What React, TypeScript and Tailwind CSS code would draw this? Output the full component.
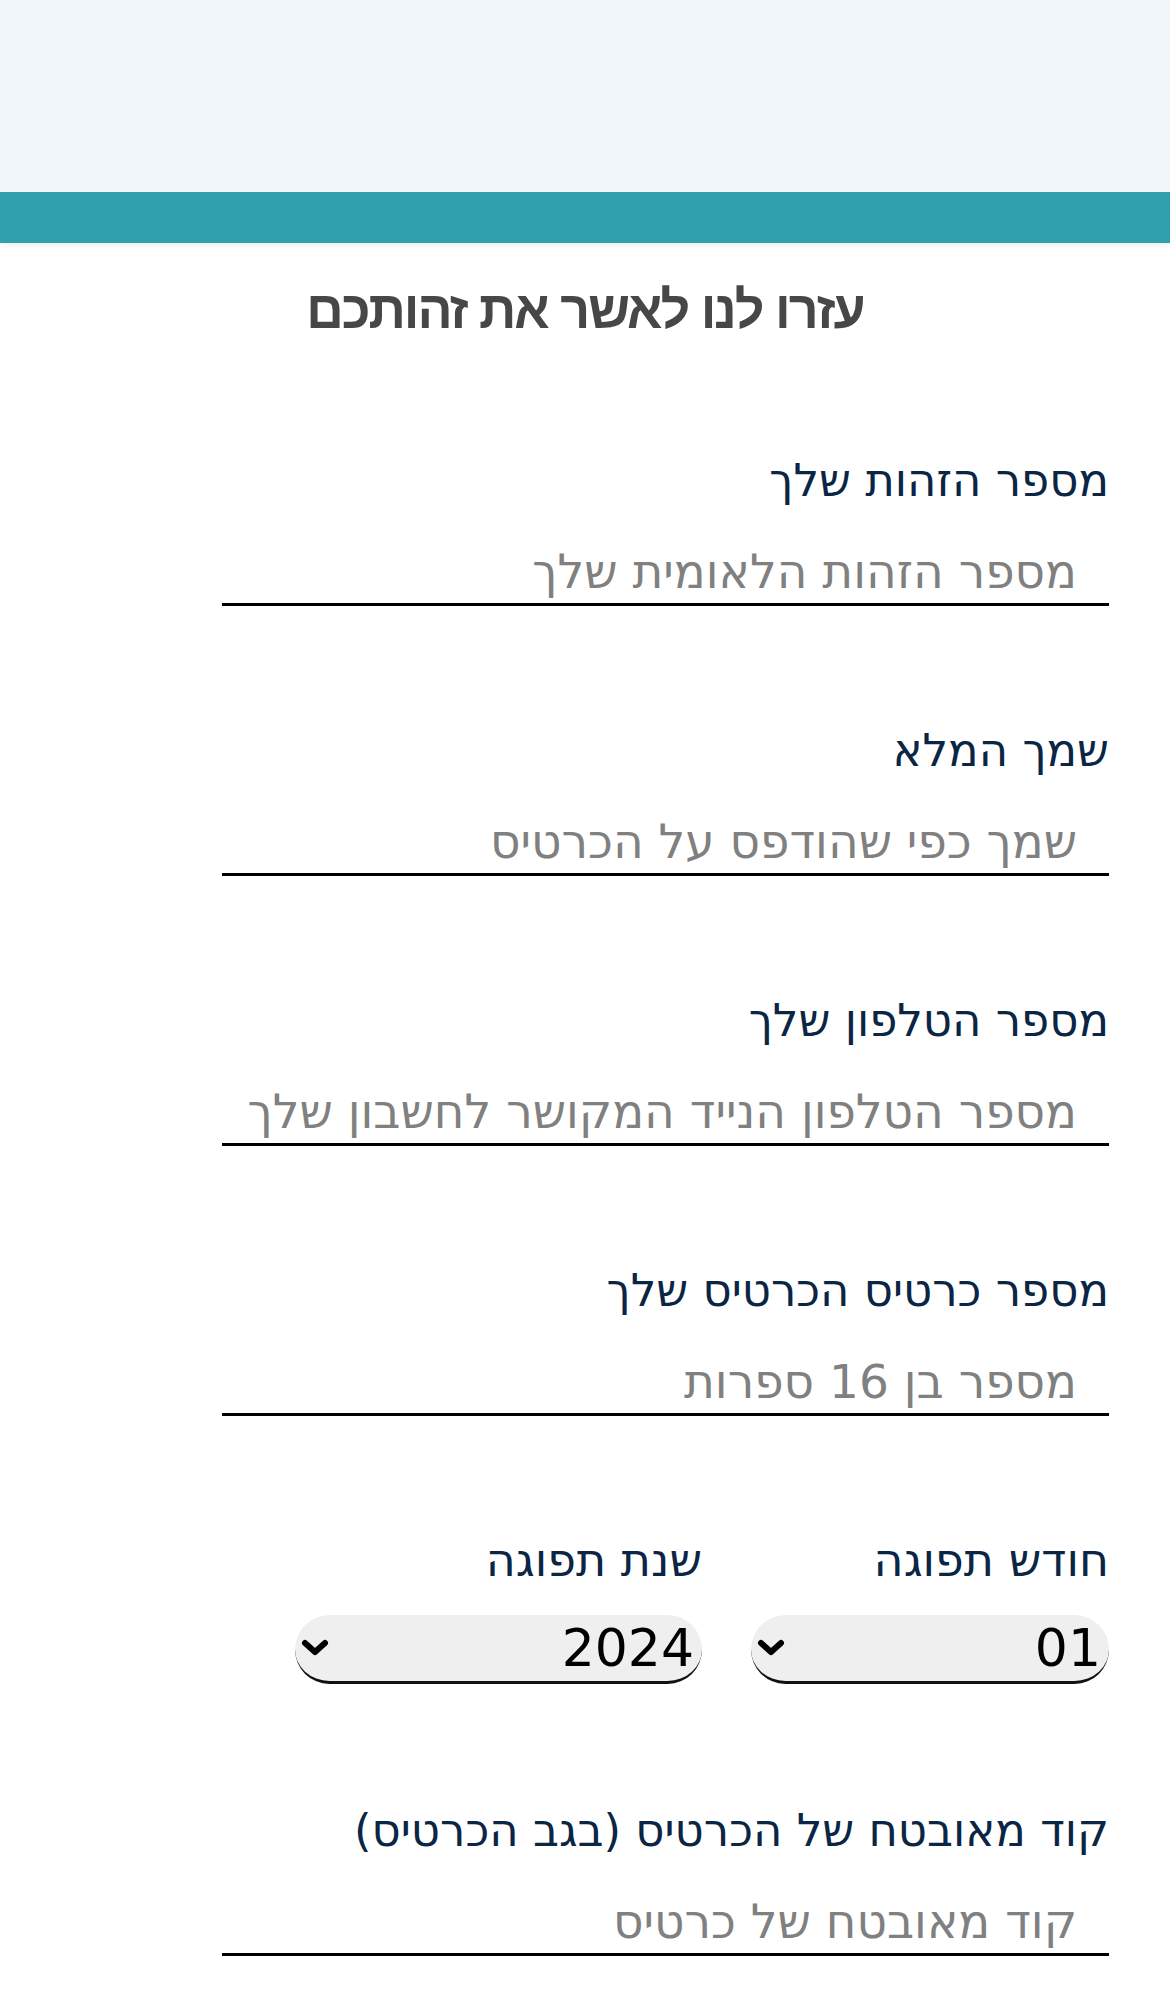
const fieldFont = { fontFamily: '"DejaVu Sans", sans-serif' }

interface FieldProps { label: string; placeholder: string; gapTop: string }

const Field = ({ label, placeholder, gapTop }: FieldProps) => (
  <div className={`flex flex-col ${gapTop}`}>
    <label className="h-[52px] whitespace-nowrap text-[45px] leading-[52px] text-[#0b2545]">{label}</label>
    <input
      type="text"
      placeholder={placeholder}
      className="mt-[34px] h-[65px] w-full border-b-[3px] border-black bg-transparent pr-[32px] text-[47px] text-black outline-none placeholder:text-[#808080]"
      style={fieldFont}
    />
  </div>
)

const Chevron = () => (
  <svg viewBox="0 0 30 20" className="h-[20px] w-[30px]" fill="none" stroke="#000" strokeWidth="6" strokeLinecap="round" strokeLinejoin="round">
    <path d="M5 5 L15 14 L25 5" />
  </svg>
)

interface SelectProps { value: string; width: string }

const FakeSelect = ({ value, width }: SelectProps) => (
  <div className={`relative h-[69px] ${width} rounded-full border-b-[3px] border-[#111] bg-[#efefef]`}>
    <select
      defaultValue={value}
      className="h-full w-full appearance-none rounded-full bg-transparent pr-[8px] pl-[40px] text-[52px] leading-none text-black outline-none"
      style={fieldFont}
    >
      <option value={value}>{value}</option>
    </select>
    <span className="pointer-events-none absolute top-1/2 left-[5px] -translate-y-1/2">
      <Chevron />
    </span>
  </div>
)

export default function App() {
  return (
    <div className="min-h-screen w-[1170px] bg-white" style={fieldFont}>
      <div className="h-[192px] bg-[#f1f6fa]" />
      <div className="h-[51px] bg-[#30a0af] shadow-[0_3px_6px_rgba(0,0,0,0.06)]" />

      <h1
        className="mt-[39px] h-[56px] text-center text-[52px] leading-[56px] font-bold tracking-[-2px] text-[#474747]"
        dir="rtl"
        style={{ fontFamily: '"Liberation Sans", Arial, sans-serif' }}
      >
        עזרו לנו לאשר את זהותכם
      </h1>

      <form dir="rtl" className="ml-[222px] mt-[117px] flex w-[887px] flex-col pb-[30px]">
        <Field label="מספר הזהות שלך" placeholder="מספר הזהות הלאומית שלך" gapTop="" />
        <Field label="שמך המלא" placeholder="שמך כפי שהודפס על הכרטיס" gapTop="mt-[119px]" />
        <Field label="מספר הטלפון שלך" placeholder="מספר הטלפון הנייד המקושר לחשבון שלך" gapTop="mt-[119px]" />
        <Field label="מספר כרטיס הכרטיס שלך" placeholder="מספר בן 16 ספרות" gapTop="mt-[119px]" />

        <div className="mt-[118px] flex gap-[49px]">
          <div className="flex flex-col">
            <label className="h-[52px] text-[46px] leading-[52px] text-[#0b2545]">חודש תפוגה</label>
            <div className="mt-[29px]">
              <FakeSelect value="01" width="w-[358px]" />
            </div>
          </div>
          <div className="flex flex-col">
            <label className="h-[52px] text-[46px] leading-[52px] text-[#0b2545]">שנת תפוגה</label>
            <div className="mt-[29px]">
              <FakeSelect value="2024" width="w-[407px]" />
            </div>
          </div>
        </div>

        <Field label="קוד מאובטח של הכרטיס (בגב הכרטיס)" placeholder="קוד מאובטח של כרטיס" gapTop="mt-[121px]" />
      </form>
    </div>
  )
}
